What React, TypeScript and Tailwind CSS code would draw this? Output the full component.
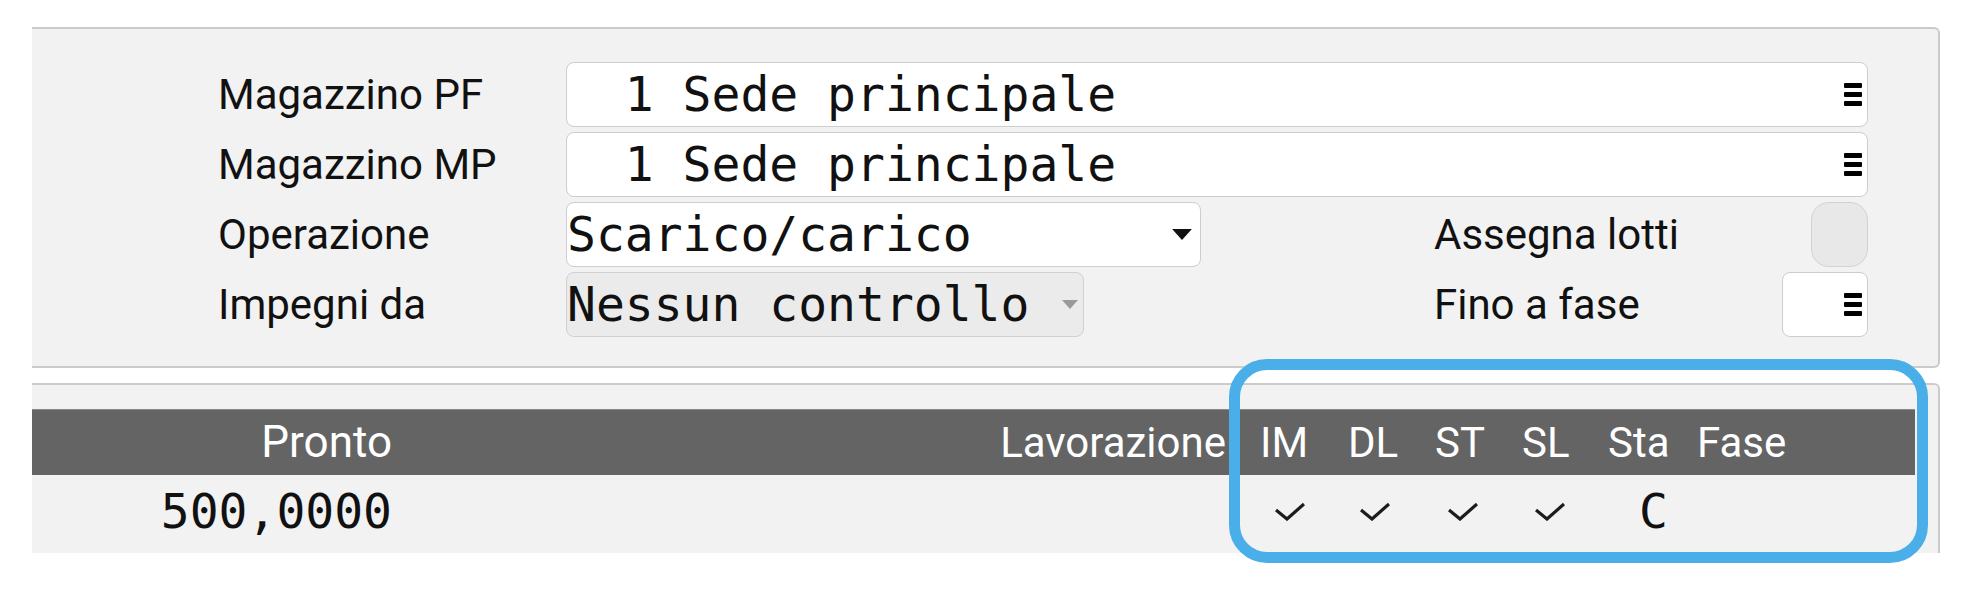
import React from "react";

const sans = "font-['Roboto',sans-serif]";
const mono = "font-['DejaVu_Sans_Mono',monospace]";

function ListIcon() {
  return (
    <div className="flex w-[18px] flex-col gap-[4px]">
      <span className="h-[5px] w-full rounded-[1px] bg-black" />
      <span className="h-[5px] w-full rounded-[1px] bg-black" />
      <span className="h-[5px] w-full rounded-[1px] bg-black" />
    </div>
  );
}

function Caret({ color, w, h }: { color: string; w: number; h: number }) {
  return (
    <svg width={w} height={h} viewBox="0 0 18 10">
      <polygon points="0,0 18,0 9,10" fill={color} />
    </svg>
  );
}

function Check() {
  return (
    <svg width="30" height="20" viewBox="0 0 30 20">
      <polyline points="1,9 12,18 29,3" fill="none" stroke="#1c1c1c" strokeWidth="3.2" />
    </svg>
  );
}

function Label({ children }: { children: React.ReactNode }) {
  return (
    <div className={`${sans} w-[348px] shrink-0 text-[42px] leading-[67px] text-[#111]`}>
      {children}
    </div>
  );
}

function LookupInput({ value }: { value: string }) {
  return (
    <div className="flex h-[65px] flex-1 items-center rounded-[8px] border border-[#cdcdcd] bg-white pr-[5px]">
      <span className={`${mono} flex-1 whitespace-pre text-[48px] leading-[63px] text-[#111]`}>{value}</span>
      <ListIcon />
    </div>
  );
}

const cols = "grid grid-cols-[368px_832px_98px_90px_85px_90px_90px_1fr]";

export default function App() {
  return (
    <div className="relative h-[590px] w-[1972px] overflow-hidden bg-white pt-[27px]">
      {/* Top form panel */}
      <div className="ml-[32px] w-[1908px] rounded-tr-[6px] rounded-br-[6px] border-t-2 border-r-2 border-b-2 border-[#cbcbcb] bg-[#f2f2f2] pt-[33px] pb-[29px] pl-[186px] pr-[70px]">
        <div className="flex flex-col gap-[5px]">
          <div className="flex h-[65px] items-center">
            <Label>Magazzino PF</Label>
            <LookupInput value="  1 Sede principale" />
          </div>
          <div className="flex h-[65px] items-center">
            <Label>Magazzino MP</Label>
            <LookupInput value="  1 Sede principale" />
          </div>
          <div className="flex h-[65px] items-center">
            <Label>Operazione</Label>
            <div className="w-[868px] shrink-0">
              <div className="flex h-[65px] w-[635px] items-center rounded-[8px] border border-[#cdcdcd] bg-white pr-[8px]">
                <span className={`${mono} flex-1 text-[48px] leading-[63px] text-[#111]`}>Scarico/carico</span>
                <Caret color="#111" w={20} h={11} />
              </div>
            </div>
            <div className={`${sans} flex-1 text-[42px] leading-[67px] text-[#111]`}>Assegna lotti</div>
            <div className="h-[65px] w-[57px] rounded-[18px] border border-[#d2d2d2] bg-[#e8e8e8]" />
          </div>
          <div className="flex h-[65px] items-center">
            <Label>Impegni da</Label>
            <div className="w-[868px] shrink-0">
              <div className="flex h-[65px] w-[518px] items-center rounded-[8px] border border-[#d0d0d0] bg-[#ebebeb] pr-[5px]">
                <span className={`${mono} flex-1 text-[48px] leading-[63px] text-[#111]`}>Nessun controllo</span>
                <Caret color="#9a9a9a" w={16} h={9} />
              </div>
            </div>
            <div className={`${sans} flex-1 text-[42px] leading-[67px] text-[#111]`}>Fino a fase</div>
            <div className="flex h-[65px] w-[86px] items-center justify-end rounded-[8px] border border-[#cdcdcd] bg-white pr-[5px]">
              <ListIcon />
            </div>
          </div>
        </div>
      </div>

      {/* Grid panel */}
      <div className="mt-[15px] ml-[32px] h-[170px] w-[1908px] rounded-tr-[6px] border-t-2 border-r-2 border-[#cbcbcb] bg-[#f2f2f2] pt-[24px] pr-[23px]">
        <div className={`${cols} ${sans} h-[66px] border-t border-[#8a8a8a] bg-[#646464] text-[42px] leading-[65px] text-white`}>
          <div className="pr-[8px] text-right text-[44px]">Pronto</div>
          <div className="pr-[6px] text-right">Lavorazione</div>
          <div className="pl-[28px]">IM</div>
          <div className="pl-[18px]">DL</div>
          <div className="pl-[15px]">ST</div>
          <div className="pl-[17px]">SL</div>
          <div className="pl-[13px]">Sta</div>
          <div className="pl-[12px]">Fase</div>
        </div>
        <div className={`${cols} h-[72px] items-center bg-[#f2f2f2] text-[#111]`}>
          <div className={`${mono} pr-[8px] text-right text-[48px] leading-[72px]`}>500,0000</div>
          <div />
          <div className="pl-[43px]"><Check /></div>
          <div className="pl-[30px]"><Check /></div>
          <div className="pl-[28px]"><Check /></div>
          <div className="pl-[30px]"><Check /></div>
          <div className={`${mono} pl-[44px] text-[48px] leading-[72px]`}>C</div>
          <div />
        </div>
      </div>

      {/* Highlight annotation */}
      <div className="absolute top-[359px] left-[1229px] h-[204px] w-[699px] rounded-[38px] border-[11px] border-[#4aaee8]" />
    </div>
  );
}
